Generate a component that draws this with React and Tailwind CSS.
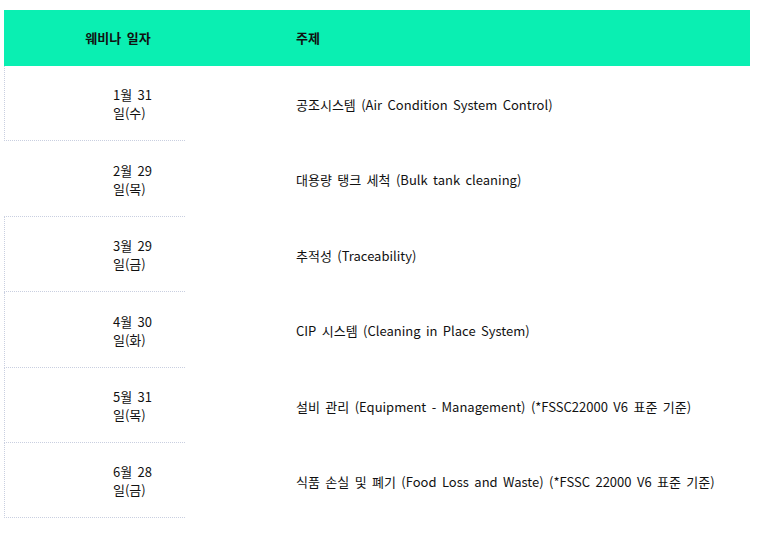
const ROWS = [
  { month: '1월 31', day: '일(수)', topic: '공조시스템 (Air Condition System Control)', h: 'h-[75px]', left: true },
  { month: '2월 29', day: '일(목)', topic: '대용량 탱크 세척 (Bulk tank cleaning)', h: 'h-[76px]', left: false },
  { month: '3월 29', day: '일(금)', topic: '추적성 (Traceability)', h: 'h-[75px]', left: true },
  { month: '4월 30', day: '일(화)', topic: 'CIP 시스템 (Cleaning in Place System)', h: 'h-[76px]', left: true },
  { month: '5월 31', day: '일(목)', topic: '설비 관리 (Equipment - Management) (*FSSC22000 V6 표준 기준)', h: 'h-[75px]', left: true },
  { month: '6월 28', day: '일(금)', topic: '식품 손실 및 폐기 (Food Loss and Waste) (*FSSC 22000 V6 표준 기준)', h: 'h-[75px]', left: true },
];

export default function App() {
  return (
    <div
      className="min-h-[538px] bg-white pl-[4px] pt-[10px] text-[13px] text-[#111] [word-spacing:2.5px]"
      style={{ fontFamily: '"Noto Sans CJK KR", "Noto Sans", sans-serif' }}
    >
      <div className="w-[746px]">
        <div className="flex h-[56px] items-center bg-[#0aefb2] font-bold">
          <div className="w-[228px] text-center">웨비나 일자</div>
          <div className="pl-[64px]">주제</div>
        </div>
        {ROWS.map((row) => (
          <div key={row.month} className={`flex ${row.h}`}>
            <div
              className={`flex w-[181px] shrink-0 items-center border-b border-dotted border-[#c9cfe0] pt-[2px] leading-[18px] ${
                row.left ? 'border-l pl-[108px]' : 'pl-[109px]'
              }`}
            >
              <div>
                <div>{row.month}</div>
                <div>{row.day}</div>
              </div>
            </div>
            <div className="flex items-center pl-[111px] pt-[2px]">{row.topic}</div>
          </div>
        ))}
      </div>
    </div>
  );
}
